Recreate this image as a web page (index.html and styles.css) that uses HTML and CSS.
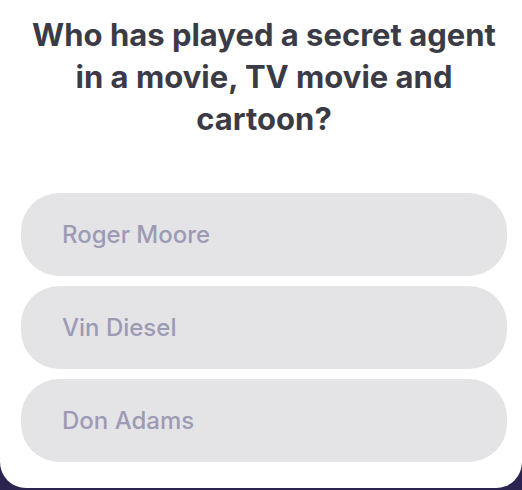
FILE: index.html
```html
<!DOCTYPE html>
<html>
<head>
<meta charset="utf-8">
<link rel="stylesheet" href="styles.css">
</head>
<body>
<div class="card">
  <h1 class="question">Who has played a secret agent<br>in a movie, TV movie and<br>cartoon?</h1>
  <div class="answers">
    <div class="answer">Roger Moore</div>
    <div class="answer">Vin Diesel</div>
    <div class="answer">Don Adams</div>
  </div>
</div>
</body>
</html>
```
FILE: styles.css
```css
html, body {
  margin: 0;
  padding: 0;
  background: #2b2350;
  height: 490px;
  overflow: hidden;
}
.card {
  background: #ffffff;
  height: 488px;
  border-radius: 0 0 26px 26px;
  box-sizing: border-box;
  padding: 14px 15px 0 21px;
  font-family: Inter, Lato, sans-serif;
}
.question {
  margin: 0;
  text-align: center;
  font-size: 31px;
  line-height: 42px;
  font-weight: 700;
  color: #3b3b46;
}
.answers {
  margin-top: 53px;
  display: flex;
  flex-direction: column;
  gap: 10px;
}
.answer {
  height: 83px;
  background: #e4e4e6;
  border-radius: 38px;
  display: flex;
  align-items: center;
  padding-left: 41px;
  font-size: 24px;
  font-weight: 500;
  color: #9d9ab6;
}
```
